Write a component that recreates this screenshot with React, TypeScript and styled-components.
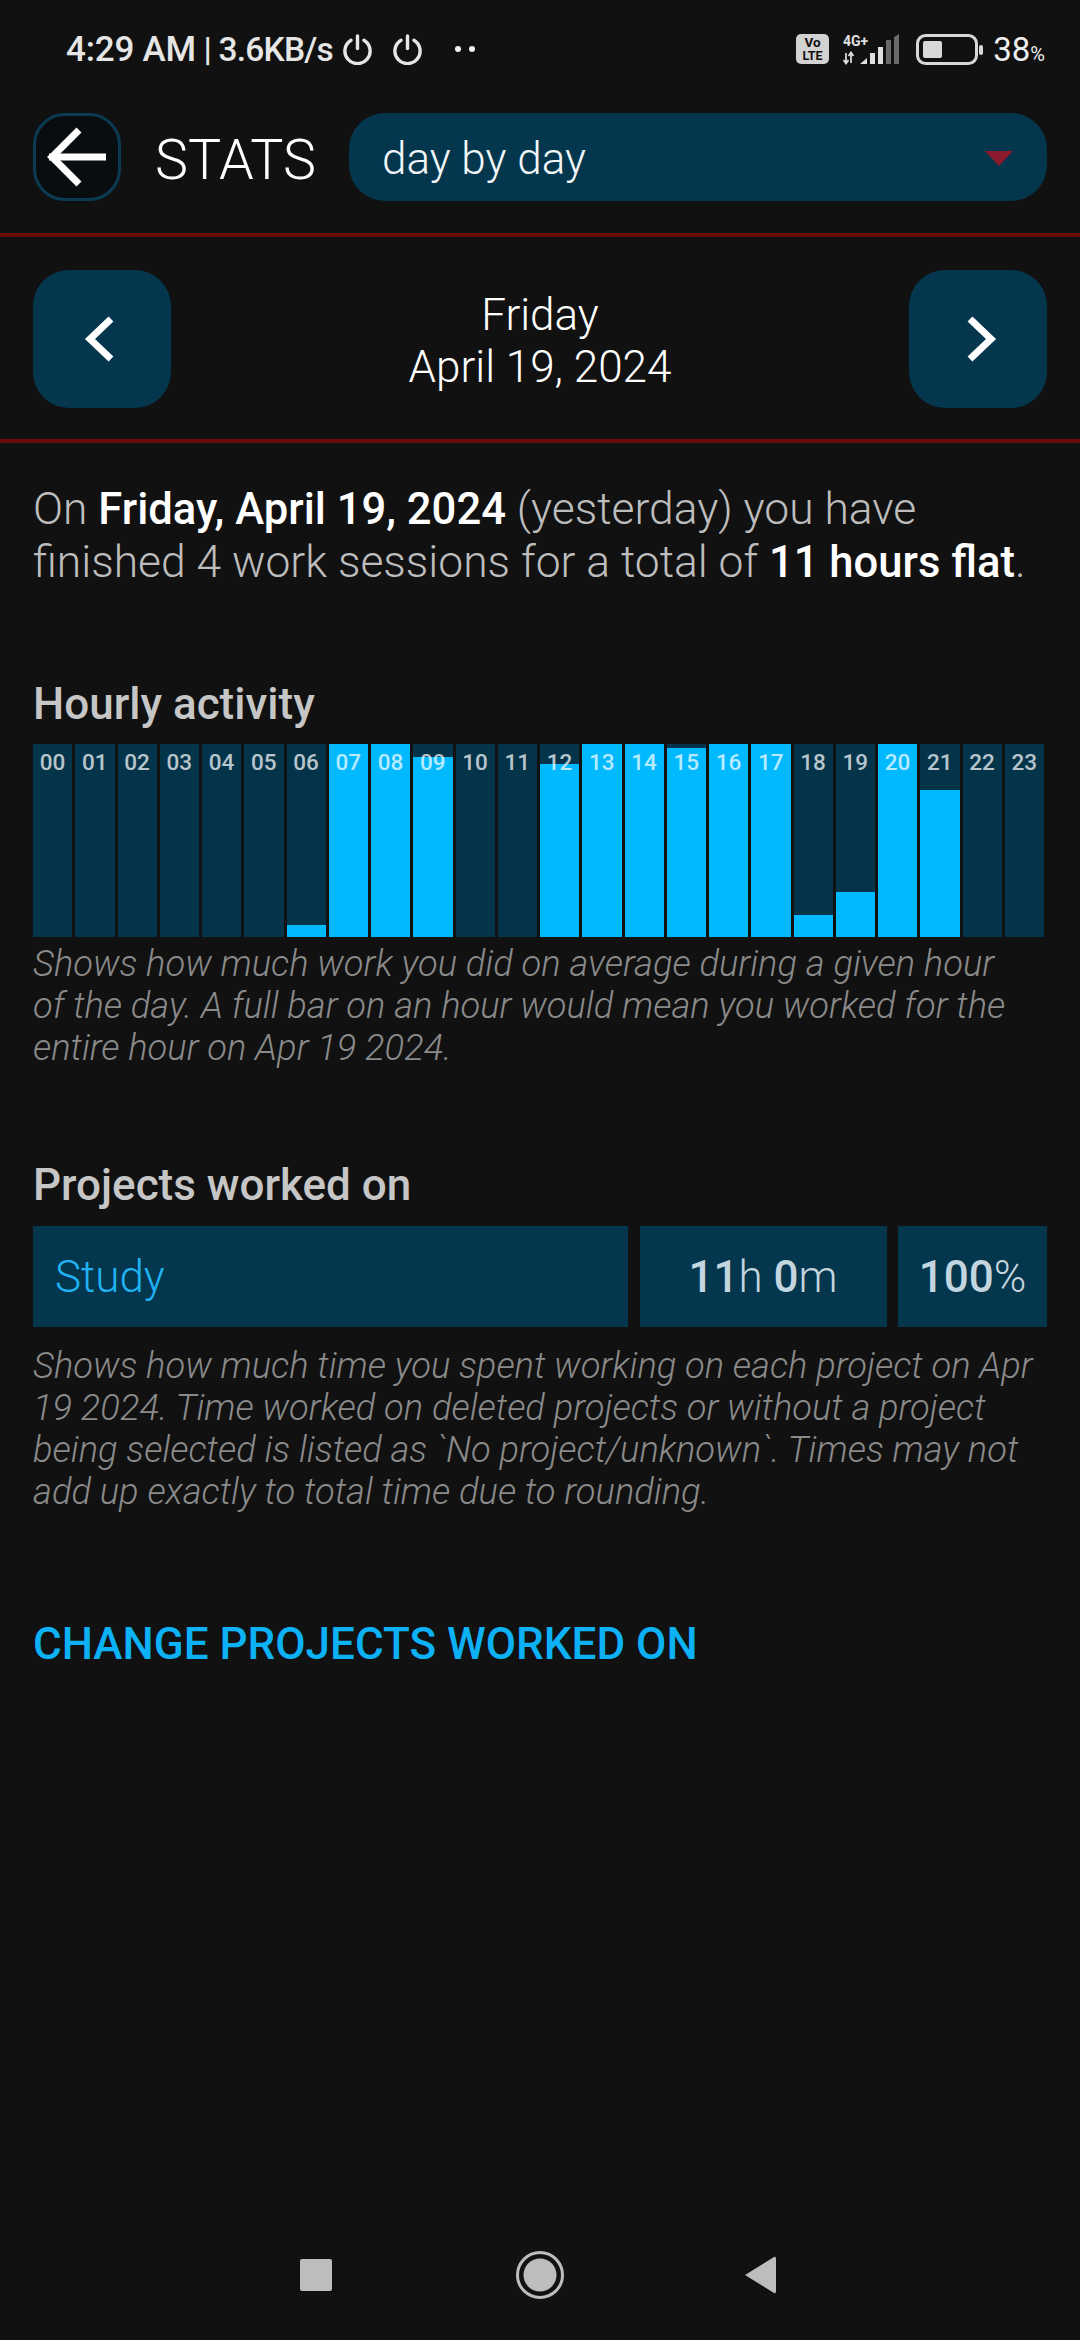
import React from 'react'
import styled, { createGlobalStyle } from 'styled-components'

const GlobalStyle = createGlobalStyle`
  html, body {
    margin: 0;
    padding: 0;
    background: #111111;
  }
  * {
    box-sizing: border-box;
  }
`

//#region  styled components
const Page = styled.div`
  width: 1080px;
  height: 2340px;
  display: flex;
  flex-direction: column;
  background: #111111;
  font-family: Roboto, 'Noto Sans', sans-serif;
  color: #fff;
  overflow: hidden;
`
const StatusBar = styled.div`
  height: 113px;
  flex: none;
  padding: 29px 35px 0 66px;
  display: flex;
  align-items: flex-start;
  justify-content: space-between;
  color: #e6e6e6;
`
const StatusGroup = styled.div`
  display: flex;
  align-items: center;
  height: 40px;
`
const StatusTime = styled.span`
  font-size: 35px;
  font-weight: 500;
  letter-spacing: -0.2px;
  white-space: nowrap;
`
const StatusSpeed = styled.span`
  font-size: 33.5px;
  font-weight: 500;
  letter-spacing: -0.8px;
  white-space: nowrap;
`
const StatusPercent = styled.span`
  font-size: 33px;
  font-weight: 400;
  margin-left: 9px;
  color: #eeeeee;
  & small {
    font-size: 20px;
  }
`
const Header = styled.div`
  height: 124px;
  flex: none;
  padding: 0 33px;
  display: flex;
  align-items: flex-start;
  border-bottom: 4px solid #6b0a0c;
`
const BackButton = styled.div`
  width: 88px;
  height: 88px;
  flex: none;
  border: 3px solid #0b3b52;
  border-radius: 32px;
  background: #0a0d0f;
  display: flex;
  align-items: center;
  justify-content: center;
`
const Title = styled.div`
  width: 193px;
  padding: 3px 0 0 34px;
  flex: none;
  font-size: 55.6px;
  font-weight: 300;
  line-height: 88px;
  white-space: nowrap;
`
const Select = styled.div`
  flex: 1;
  height: 88px;
  margin-left: 35px;
  padding: 3px 34px 0 33px;
  border-radius: 36px;
  background: #04364d;
  display: flex;
  align-items: center;
  justify-content: space-between;
  font-size: 44px;
  font-weight: 300;
  color: #f2f6f8;
`
const Caret = styled.div`
  width: 0;
  height: 0;
  border-left: 14px solid transparent;
  border-right: 14px solid transparent;
  border-top: 15px solid #8a1a2c;
`
const DateNav = styled.div`
  height: 206px;
  flex: none;
  padding: 33px 33px 0;
  display: flex;
  align-items: flex-start;
  justify-content: space-between;
  border-bottom: 4px solid #6b0a0c;
`
const NavButton = styled.div`
  width: 138px;
  height: 138px;
  border-radius: 36px;
  background: #04364d;
  display: flex;
  align-items: center;
  justify-content: center;
`
const DateLabel = styled.div`
  height: 138px;
  text-align: center;
  font-size: 44px;
  font-weight: 300;
  line-height: 52px;
  padding-top: 19px;
`
const Summary = styled.p`
  margin: 40px 33px 0;
  font-size: 44.4px;
  font-weight: 300;
  line-height: 52px;
  color: #bdbdbd;
  white-space: nowrap;
  & b {
    font-size: 43.6px;
    font-weight: 500;
    color: #fff;
  }
`
const SectionTitle = styled.h2<{ $top: number }>`
  margin: ${(p) => p.$top}px 33px 0;
  font-size: 44px;
  font-weight: 500;
  line-height: 52px;
  color: #c6c6c6;
`
const Chart = styled.div`
  margin: 14px 33px 0;
  height: 193px;
  display: flex;
`
const HourCell = styled.div`
  flex: 1;
  margin-right: 3px;
  position: relative;
  background: #04344a;
  display: flex;
  align-items: flex-end;
`
const HourFill = styled.div`
  width: 100%;
  background: #00b9ff;
`
const HourLabel = styled.span`
  position: absolute;
  top: 2px;
  left: 0;
  right: 0;
  text-align: center;
  font-size: 22.5px;
  font-weight: 500;
  line-height: 32px;
  color: rgba(255, 255, 255, 0.72);
`
const Caption = styled.p<{ $top: number }>`
  margin: ${(p) => p.$top}px 33px 0;
  font-size: 36.3px;
  font-weight: 300;
  font-style: italic;
  line-height: 41.8px;
  color: #8a8a8a;
  white-space: nowrap;
`
const ProjectRow = styled.div`
  margin: 15px 33px 0;
  height: 101px;
  display: grid;
  grid-template-columns: 595px 247px 149px;
  column-gap: 11.5px;
`
const ProjectCell = styled.div<{ $center?: boolean }>`
  background: #04364d;
  display: flex;
  align-items: center;
  justify-content: ${(p) => (p.$center ? 'center' : 'flex-start')};
  padding: ${(p) => (p.$center ? '0' : '0 0 0 22px')};
  font-size: 44px;
  font-weight: 300;
  color: #c3d5de;
  & b {
    font-weight: 500;
  }
`
const ProjectName = styled.span`
  color: #1fb2f3;
`
const ChangeLink = styled.div`
  margin: 105px 33px 0;
  font-size: 44px;
  font-weight: 500;
  line-height: 52px;
  color: #0cb1f6;
  white-space: nowrap;
`
const NavBar = styled.div`
  margin-top: auto;
  height: 100px;
  padding-top: 7px;
  flex: none;
  display: flex;
  justify-content: center;
  align-items: flex-start;
`
const NavSlot = styled.div`
  width: 224px;
  height: 56px;
  display: flex;
  align-items: center;
  justify-content: center;
`
const BackSlot = styled(NavSlot)`
  padding-right: 8px;
`
const PowerSvg = styled.svg<{ $left: number }>`
  margin-left: ${(p) => p.$left}px;
`
const DotsSvg = styled.svg`
  margin-left: 32px;
`
const SignalSvg = styled.svg`
  margin-left: 14px;
`
const BatterySvg = styled.svg`
  margin-left: 15px;
`
const ChevronSvg = styled.svg<{ $flip?: boolean }>`
  margin: ${(p) => (p.$flip ? '0 0 0 8px' : '0 6px 0 0')};
  transform: ${(p) => (p.$flip ? 'scaleX(-1)' : 'none')};
`
//#endregion

const fills: Record<number, number> = {
  6: 12,
  7: 193,
  8: 193,
  9: 180,
  12: 173,
  13: 193,
  14: 193,
  15: 189,
  16: 193,
  17: 193,
  18: 22,
  19: 45,
  20: 193,
  21: 147,
}

const PowerIcon = ({ left }: { left: number }) => (
  <PowerSvg $left={left} width="31" height="31" viewBox="0 0 31 31" fill="none" stroke="#e6e6e6" strokeWidth="3.4" strokeLinecap="round">
    <path d="M9 6.2 A12.6 12.6 0 1 0 22 6.2" />
    <path d="M15.5 2 V14.5" />
  </PowerSvg>
)

const Dots = () => (
  <DotsSvg width="22" height="8" viewBox="0 0 22 8" fill="#f2f2f2">
    <circle cx="3" cy="4" r="3" />
    <circle cx="17" cy="4" r="3" />
  </DotsSvg>
)

const VoLte = () => (
  <svg width="33" height="30" viewBox="0 0 33 30">
    <rect width="33" height="30" rx="5" fill="#d2d2d2" />
    <text x="16.5" y="13" textAnchor="middle" fontFamily="Roboto" fontSize="13.5" fontWeight="700" fill="#111">Vo</text>
    <text x="16.5" y="26" textAnchor="middle" fontFamily="Roboto" fontSize="12.5" fontWeight="700" fill="#111">LTE</text>
  </svg>
)

const Signal = () => (
  <SignalSvg width="58" height="31" viewBox="0 0 58 31">
    <text x="0" y="12" fontFamily="Roboto" fontSize="14" fontWeight="700" fill="#e0e0e0">4G+</text>
    <path d="M3 19 V29 M0.5 26 L3 29.5 L5.5 26 M8 29 V19 M5.5 22 L8 18.5 L10.5 22" stroke="#e0e0e0" strokeWidth="1.7" fill="none" />
    <path d="M17 30 L24 24 V30 Z" fill="#e0e0e0" />
    <rect x="27" y="19" width="5" height="11" fill="#e0e0e0" />
    <rect x="35" y="13" width="5" height="17" fill="#e0e0e0" />
    <rect x="43" y="6" width="5" height="24" fill="#6a6a6a" />
    <path d="M51 3 L56 0 V30 H51 Z" fill="#6a6a6a" />
  </SignalSvg>
)

const Battery = () => (
  <BatterySvg width="68" height="31" viewBox="0 0 68 31">
    <rect x="1.5" y="1.5" width="59" height="28" rx="8" fill="none" stroke="#d8d8d8" strokeWidth="3" />
    <rect x="7" y="7" width="19" height="17" rx="2" fill="#d8d8d8" />
    <rect x="63" y="11" width="4" height="10" rx="2" fill="#d8d8d8" />
  </BatterySvg>
)

const ArrowBack = () => (
  <svg width="62" height="60" viewBox="0 0 62 60" fill="none" stroke="#fff" strokeWidth="7">
    <path d="M3 30 H60" />
    <path d="M33 3 L6 30 L33 57" />
  </svg>
)

const Chevron = ({ flip }: { flip?: boolean }) => (
  <ChevronSvg $flip={flip} width="32" height="48" viewBox="0 0 32 48" fill="none" stroke="#fff" strokeWidth="7">
    <path d="M28 4 L7 24 L28 44" />
  </ChevronSvg>
)

const App = () => {
  const hours = Array.from({ length: 24 }, (_, i) => i)
  return (
    <Page>
      <GlobalStyle />
      <StatusBar>
        <StatusGroup>
          <StatusTime>4:29 AM</StatusTime>
          <StatusSpeed>&nbsp;| 3.6KB/s</StatusSpeed>
          <PowerIcon left={9} />
          <PowerIcon left={19} />
          <Dots />
        </StatusGroup>
        <StatusGroup>
          <VoLte />
          <Signal />
          <Battery />
          <StatusPercent>
            38<small>%</small>
          </StatusPercent>
        </StatusGroup>
      </StatusBar>
      <Header>
        <BackButton>
          <ArrowBack />
        </BackButton>
        <Title>STATS</Title>
        <Select>
          day by day
          <Caret />
        </Select>
      </Header>
      <DateNav>
        <NavButton>
          <Chevron />
        </NavButton>
        <DateLabel>
          Friday
          <br />
          April 19, 2024
        </DateLabel>
        <NavButton>
          <Chevron flip />
        </NavButton>
      </DateNav>
      <Summary>
        On <b>Friday, April 19, 2024</b> (yesterday) you have
        <br />
        finished 4 work sessions for a total of <b>11 hours flat</b>.
      </Summary>
      <SectionTitle $top={89}>Hourly activity</SectionTitle>
      <Chart>
        {hours.map((h) => (
          <HourCell key={h}>
            <HourFill style={{ height: fills[h] ?? 0 }} />
            <HourLabel>{String(h).padStart(2, '0')}</HourLabel>
          </HourCell>
        ))}
      </Chart>
      <Caption $top={6}>
        Shows how much work you did on average during a given hour
        <br />
        of the day. A full bar on an hour would mean you worked for the
        <br />
        entire hour on Apr 19 2024.
      </Caption>
      <SectionTitle $top={91}>Projects worked on</SectionTitle>
      <ProjectRow>
        <ProjectCell>
          <ProjectName>Study</ProjectName>
        </ProjectCell>
        <ProjectCell $center>
          <span>
            <b>11</b>h <b>0</b>m
          </span>
        </ProjectCell>
        <ProjectCell $center>
          <span>
            <b>100</b>%
          </span>
        </ProjectCell>
      </ProjectRow>
      <Caption $top={18}>
        Shows how much time you spent working on each project on Apr
        <br />
        19 2024. Time worked on deleted projects or without a project
        <br />
        being selected is listed as `No project/unknown`. Times may not
        <br />
        add up exactly to total time due to rounding.
      </Caption>
      <ChangeLink>CHANGE PROJECTS WORKED ON</ChangeLink>
      <NavBar>
        <NavSlot>
          <svg width="32" height="32" viewBox="0 0 32 32">
            <rect width="32" height="32" rx="2" fill="#bdbdbd" />
          </svg>
        </NavSlot>
        <NavSlot>
          <svg width="48" height="48" viewBox="0 0 48 48">
            <circle cx="24" cy="24" r="22.5" fill="none" stroke="#bdbdbd" strokeWidth="3" />
            <circle cx="24" cy="24" r="16.5" fill="#bdbdbd" />
          </svg>
        </NavSlot>
        <BackSlot>
          <svg width="32" height="38" viewBox="0 0 32 38">
            <path d="M1 19 L30 1 Q32 0 32 3 V35 Q32 38 30 37 Z" fill="#bdbdbd" />
          </svg>
        </BackSlot>
      </NavBar>
    </Page>
  )
}

export default App
